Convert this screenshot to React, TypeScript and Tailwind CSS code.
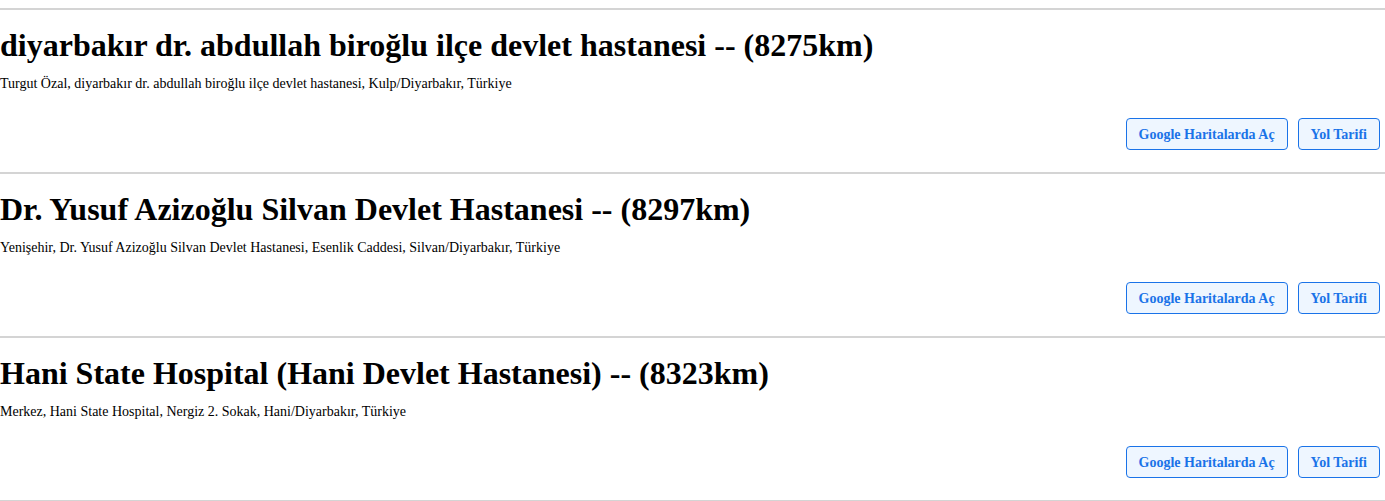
const HOSPITALS = [
  {
    name: 'diyarbakır dr. abdullah biroğlu ilçe devlet hastanesi',
    km: 8275,
    address: 'Turgut Özal, diyarbakır dr. abdullah biroğlu ilçe devlet hastanesi, Kulp/Diyarbakır, Türkiye',
  },
  {
    name: 'Dr. Yusuf Azizoğlu Silvan Devlet Hastanesi',
    km: 8297,
    address: 'Yenişehir, Dr. Yusuf Azizoğlu Silvan Devlet Hastanesi, Esenlik Caddesi, Silvan/Diyarbakır, Türkiye',
  },
  {
    name: 'Hani State Hospital (Hani Devlet Hastanesi)',
    km: 8323,
    address: 'Merkez, Hani State Hospital, Nergiz 2. Sokak, Hani/Diyarbakır, Türkiye',
  },
];

export default function App() {
  return (
    <div className="pt-2 bg-white text-black" style={{ fontFamily: '"Liberation Serif", "Times New Roman", serif' }}>
      {HOSPITALS.map(h => (
        <div key={h.name} className="border-t-2 border-[#d4d4d4] pt-[17px] pb-[22px]">
          <h1 className="text-[32px] font-bold leading-[normal]">
            {h.name} -- ({h.km}km)
          </h1>
          <p className="text-[14px] leading-[normal] mt-[12px]">{h.address}</p>

          <div className="flex justify-end gap-[10px] mt-[26px] pr-[5px]">
            <button className="h-8 px-3 rounded-[4px] border border-[#1a73e8] bg-[#eef6ff] text-[#1a73e8] text-[14px] font-bold">
              Google Haritalarda Aç
            </button>
            <button className="h-8 px-3 rounded-[4px] border border-[#1a73e8] bg-[#eef6ff] text-[#1a73e8] text-[14px] font-bold">
              Yol Tarifi
            </button>
          </div>
        </div>
      ))}
      <div className="border-t-2 border-[#d4d4d4]" />
    </div>
  );
}
